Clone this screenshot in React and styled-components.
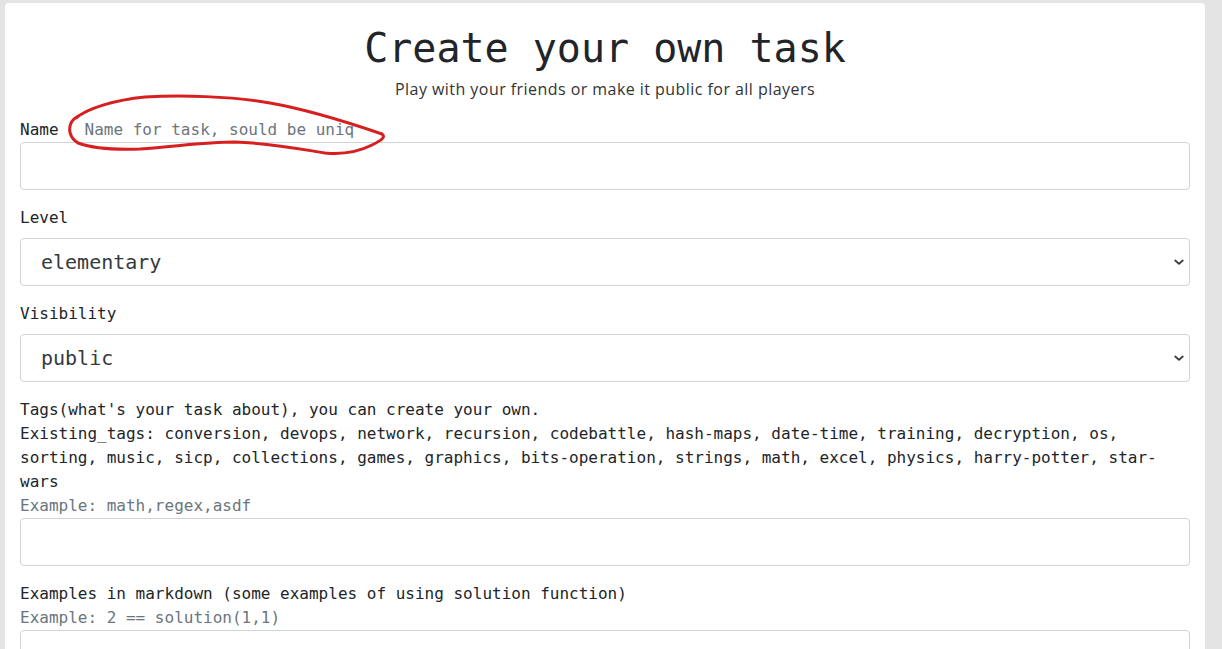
import styled, { createGlobalStyle } from 'styled-components';

const GlobalStyle = createGlobalStyle`
    html, body {
        margin: 0;
        padding: 0;
        background-color: #e4e4e4;
    }
    body {
        font-family: "DejaVu Sans Mono", "Liberation Mono", monospace;
        color: #212529;
    }
    * {
        box-sizing: border-box;
    }
`;

const Page = styled.div`
    padding: 3px 17px 0 5px;
    min-height: 649px;
`;

const Card = styled.div`
    background-color: #fff;
    border-radius: 4px 4px 0 0;
    padding: 20px 15px 0;
    height: 646px;
    overflow: hidden;
`;

const Title = styled.h1`
    margin: 0;
    text-align: center;
    font-family: "DejaVu Sans Mono", "Liberation Mono", monospace;
    font-size: 40px;
    font-weight: 400;
    line-height: 50px;
    color: #212529;
`;

const Subtitle = styled.p`
    margin: 5px 0 18px;
    text-align: center;
    font-family: "Open Sans", "Liberation Sans", sans-serif;
    font-size: 16px;
    letter-spacing: 0.45px;
    line-height: 22px;
    color: #333;
`;

const Group = styled.div`
    margin-bottom: 16px;
    position: relative;
`;

const Label = styled.label`
    display: block;
    font-size: 16px;
    line-height: 24px;
    margin-bottom: ${(p) => p.$gap || 0}px;
    color: #212529;
`;

const Hint = styled.span`
    color: #6c757d;
    margin-left: ${(p) => (p.$inline ? 26 : 0)}px;
`;

const Text = styled.div`
    font-size: 16px;
    line-height: 24px;
    color: ${(p) => (p.$muted ? '#6c757d' : '#212529')};
`;

const Input = styled.input`
    display: block;
    width: 100%;
    height: 48px;
    border: 1px solid #ced4da;
    border-radius: 4px;
    background: #fff;
    padding: 0 20px;
    font-family: inherit;
    font-size: 20px;
    outline: none;
`;

const SelectBox = styled.div`
    position: relative;
    height: 48px;
    border: 1px solid #ced4da;
    border-radius: 4px;
    display: flex;
    align-items: center;
    padding: 0 20px;
    font-size: 20px;
    color: #343a40;
`;

const Chevron = styled.svg`
    margin-left: auto;
    margin-right: -16px;
    width: 12px;
    height: 12px;
`;

const Scribble = styled.svg`
    position: absolute;
    left: 0;
    top: 0;
    pointer-events: none;
    overflow: visible;
`;

const Select = ({ value }) => (
    <SelectBox>
        {value}
        <Chevron viewBox="0 0 16 16">
            <path d="M3 6l5 4.5L13 6" fill="none" stroke="#343a40" strokeWidth="2.4" strokeLinecap="round" strokeLinejoin="round" />
        </Chevron>
    </SelectBox>
);

const tags = 'Existing_tags: conversion, devops, network, recursion, codebattle, hash-maps, date-time, training, decryption, os, sorting, music, sicp, collections, games, graphics, bits-operation, strings, math, excel, physics, harry-potter, star-wars';

const App = () => {
    return (
        <Page>
            <GlobalStyle />
            <Card>
                <Title>Create your own task</Title>
                <Subtitle>Play with your friends or make it public for all players</Subtitle>

                <Group>
                    <Label>
                        Name<Hint $inline>Name for task, sould be uniq</Hint>
                    </Label>
                    <Input />
                    <Scribble width="1" height="1">
                        <path
                            d="M56 0 C68 -10 95 -18 125 -21 C160 -23 210 -22 250 -15 C290 -8 330 5 362 16 C366 19 362 22 352 27 C340 33 325 37 305 35 C280 31 250 25 215 24 C185 24 160 28 120 31 C95 32 72 30 58 25 C50 20 48 12 51 5 C53 1 56 -1 60 -3"
                            fill="none"
                            stroke="#d81f1f"
                            strokeWidth="3"
                            strokeLinecap="round"
                        />
                    </Scribble>
                </Group>

                <Group>
                    <Label $gap={8}>Level</Label>
                    <Select value="elementary" />
                </Group>

                <Group>
                    <Label $gap={8}>Visibility</Label>
                    <Select value="public" />
                </Group>

                <Group>
                    <Label>Tags(what's your task about), you can create your own.</Label>
                    <Text>{tags}</Text>
                    <Text $muted>Example: math,regex,asdf</Text>
                    <Input />
                </Group>

                <Group>
                    <Label>Examples in markdown (some examples of using solution function)</Label>
                    <Text $muted>Example: 2 == solution(1,1)</Text>
                    <Input />
                </Group>
            </Card>
        </Page>
    );
};

export default App;
